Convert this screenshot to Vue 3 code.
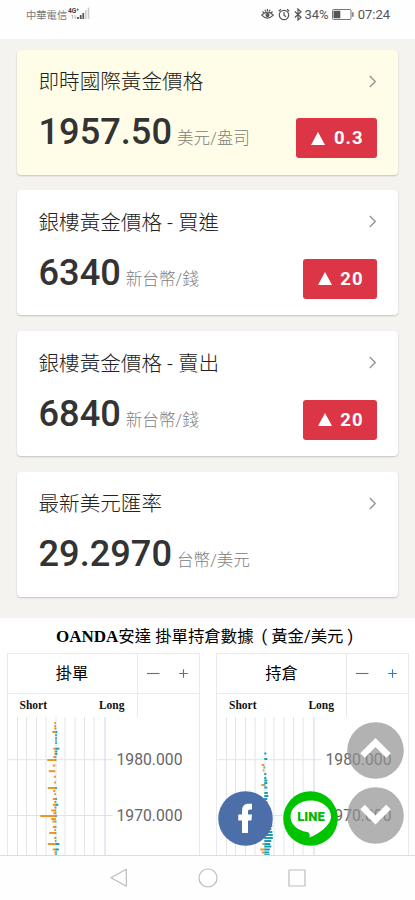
<script setup>
const cards = [
  { title: '即時國際黃金價格', value: '1957.50', unit: '美元/盎司', change: '0.3', highlight: true },
  { title: '銀樓黃金價格 - 買進', value: '6340', unit: '新台幣/錢', change: '20' },
  { title: '銀樓黃金價格 - 賣出', value: '6840', unit: '新台幣/錢', change: '20' },
  { title: '最新美元匯率', value: '29.2970', unit: '台幣/美元' },
]

const gridX = [9.5, 18.5, 28.5, 38, 48, 57, 67, 76.5, 86]

// Each row: [y, short length, long length], measured from the centre line
const panels = [
  {
    title: '掛單',
    center: 47.3,
    rows: [
      [5, 1, .6], [8, 1, .6], [10.5, 1, 1], [14, 3, 2], [17, 0, 1.5], [20, 0, 1.5], [22.5, 0, 1.5], [25, 0, 1.5],
      [30.7, 2, 4], [33.5, 1, 2], [36, 1, 2], [39, 2, 1], [42, 8, 1], [47.5, 2.5, 0], [53.2, 6.5, 0],
      [58.7, 1.5, .5], [64.5, 1, .6], [70, 7.5, 1.5], [73, 2, 0], [76, 1, .5], [81, 2.5, 1.5],
      [84, 1, 1], [86.8, 2.5, 3], [89.5, 1, 1], [92.5, 4, .8], [95.2, 2, 1], [98, 15, 1.5],
      [101, 4, .5], [103.5, 3, 1], [109, 2.5, 1], [112, 1, .5], [115, 6, 1], [120, 1, 1], [123, .5, 1],
      [126, 7.5, 4], [131.5, 2.5, 3.5], [134.5, 1, 1.5], [137, .5, 1.5],
    ],
  },
  {
    title: '持倉',
    center: 47.3,
    rows: [
      [35.5, 0, 2], [41, 0, 3], [47, 2.5, 0], [49.5, 1, .8], [52.5, 1.5, 0],
      [56, 0, 2], [60, 0, 2], [62.5, 0, 3], [65, 0, 3], [67, 3, 1],
      [69.5, 0, 3], [75, 0, 3.5], [78, 0, 4], [81, 0, 3], [84, 0, 3], [87, 0, 4], [90, 0, 4],
      [93, 0, 5], [96, 0, 6], [99, 0, 7], [102, 0, 7], [105, 0, 7], [108, 0, 8], [111, 0, 7],
      [114, 0, 8], [117, 0, 8.5], [120, 0, 8.5], [123, 0, 7], [126, 2, 6], [128.5, 0, 7],
      [131.5, 4, 5.5], [134.5, 2.5, 5], [137.2, 0, 5.5],
    ],
  },
]
</script>

<template>
  <div class="screen">
    <header class="status">
      <div class="carrier">
        <span>中華電信</span>
        <svg width="24" height="14" viewBox="0 0 24 14">
          <text x="0" y="5.5" class="net" textLength="11" lengthAdjust="spacingAndGlyphs">4G⁺</text>
          <path d="M4.5 8v3.5M3.3 9.2l1.2-1.4M7 8v3.5M8.2 10.4 7 11.6" stroke="#999" stroke-width=".7" fill="none" />
          <path d="M9 10h1.8v2H9zM11.8 8h1.8v4h-1.8zM14.4 6h1.7v6h-1.7z" fill="#555" />
          <path d="M17 3h1.6v9H17zM19.7 .5h1.6V12h-1.6z" fill="#ccc" />
        </svg>
      </div>
      <div class="indicators">
        <svg width="13" height="13" viewBox="0 0 13 13" fill="none" stroke="#555" stroke-width="1.2">
          <path d="M.7 7.2Q6.5 1.2 12.3 7.2Q6.5 13.2.7 7.2ZM1.5 3.5 2.8 4.8M4 1.7l.7 1.8M9 1.7l-.7 1.8M11.5 3.5l-1.3 1.3M6.5 1v2" />
          <circle cx="6.5" cy="7.1" r="1.5" fill="#555" />
        </svg>
        <svg class="alarm" width="12" height="13" viewBox="0 0 12 13" fill="none" stroke="#555" stroke-width="1.2">
          <circle cx="6" cy="7" r="4.7" /><path d="M6 4v3.2l2 1.5M.7 3.2 3 1.2M11.3 3.2 9 1.2" />
        </svg>
        <svg class="bluetooth" width="8" height="13" viewBox="0 0 8 13" fill="none" stroke="#555" stroke-width="1.2">
          <path d="M.8 3.5 7 9.2 4 12V1l3 2.8L.8 9.5" />
        </svg>
        <span>34%</span>
        <svg class="battery" width="22" height="11" viewBox="0 0 22 11">
          <rect x=".5" y=".5" width="18.5" height="10" rx="1" fill="none" stroke="#777" />
          <path d="M1.5 1.8h6.8v7.4H1.5zM20.3 3.3h1.2v4.5h-1.2z" fill="#555" />
        </svg>
        <span>07:24</span>
      </div>
    </header>

    <main class="prices">
      <article v-for="card in cards" :key="card.title" class="card" :class="{ highlight: card.highlight }">
        <div class="heading">
          <h2>{{ card.title }}</h2>
          <svg width="9" height="13" viewBox="0 0 9 13" fill="none" stroke="#999" stroke-width="1.5"><path d="m1.8 1 5.4 5.5-5.4 5.5" /></svg>
        </div>
        <div class="quote">
          <p><b>{{ card.value }}</b><span class="unit">{{ card.unit }}</span></p>
          <div v-if="card.change" class="change">
            <svg width="14" height="13" viewBox="0 0 14 13"><path d="M7 0 14 13H0z" fill="#fff" /></svg>
            <span>{{ card.change }}</span>
          </div>
        </div>
      </article>
    </main>

    <section class="oanda">
      <h3><span class="brand">OANDA</span>安達 掛單持倉數據<span class="paren open">(</span>黃金/美元<span class="paren close">)</span></h3>
      <div class="panels">
        <div v-for="panel in panels" :key="panel.title" class="panel">
          <div class="bar">
            <strong>{{ panel.title }}</strong>
            <div class="tools">
              <svg width="13" height="11" viewBox="0 0 13 11"><path d="M0 5.5h12.5" stroke="#3479b8" stroke-width="1.1" /></svg>
              <svg width="9" height="11" viewBox="0 0 9 11"><path d="M.3 5.5h8.4M4.5 1.2v8.6" stroke="#3479b8" stroke-width="1.1" /></svg>
            </div>
          </div>
          <div class="legend"><span>Short</span><span>Long</span></div>
          <svg class="chart" width="191" height="139" viewBox="0 0 191 139">
            <path v-for="x in gridX" :key="x" :d="`M${x} 0V139`" stroke="#e2e4e7" />
            <path d="M0 42.7H104.5M0 98.5H104.5" stroke="#e0e4e9" />
            <path d="M97 0V139" stroke="#ccd5e8" />
            <template v-for="row in panel.rows" :key="row[0]">
              <rect :x="panel.center - row[1]" :y="row[0]" :width="row[1]" height="2" fill="#f59322" />
              <rect :x="panel.center" :y="row[0]" :width="row[2]" height="2" fill="#159fb4" />
            </template>
            <text x="108.5" y="48.3" textLength="66">1980.000</text>
            <text x="108.5" y="104" textLength="66">1970.000</text>
          </svg>
        </div>
      </div>
    </section>

    <div class="floating facebook">
      <svg width="55" height="55" viewBox="0 0 55 55">
        <circle cx="27.5" cy="27.5" r="27.3" fill="#4c6fa9" />
        <path d="M24 42V29.5H20.3V23.5H24V20C24 15 26.5 12.8 30.5 12.8H34V18.5H32C30.5 18.5 30 19.3 30 20.5V23.5H34L33.4 29.5H30V42Z" fill="#fff" />
      </svg>
    </div>
    <div class="floating line">
      <svg width="55" height="55" viewBox="0 0 55 55">
        <circle cx="27.5" cy="27.5" r="27.3" fill="#00c300" />
        <path d="M28 9.5C16.5 9.5 7.5 16.5 7.5 25.5C7.5 33 14 39.5 24 41C26.5 41.5 27 42.5 26.5 46.5C34.5 43.5 48 35 48 25.5C48 16.5 39 9.5 28 9.5Z" fill="#fff" />
        <text x="28" y="30" text-anchor="middle" textLength="27.5" lengthAdjust="spacingAndGlyphs">LINE</text>
      </svg>
    </div>
    <div class="floating up">
      <svg width="57" height="57" viewBox="0 0 57 57"><circle cx="28.5" cy="28.5" r="28.3" /><path d="M15.5 33.5 28.5 20.5 41.5 33.5" /></svg>
    </div>
    <div class="floating down">
      <svg width="57" height="57" viewBox="0 0 57 57"><circle cx="28.5" cy="28.5" r="28.3" /><path d="M15.5 20 28.5 33 41.5 20" /></svg>
    </div>

    <nav class="navigation">
      <svg width="18" height="20" viewBox="0 0 18 20"><path d="M16.3 1.2v17L1 9.7z" /></svg>
      <svg width="20" height="20" viewBox="0 0 20 20"><circle cx="10" cy="10" r="9" /></svg>
      <svg width="18" height="18" viewBox="0 0 18 18"><rect x="1" y="1" width="16" height="16" /></svg>
    </nav>
  </div>
</template>

<style>
body { margin: 0; overflow: hidden; }
</style>

<style scoped>
* { box-sizing: border-box; }
h2, h3, p { margin: 0; }
svg { display: block; flex: none; }
.screen { position: relative; width: 415px; height: 900px; overflow: hidden; background: #fefefe; font-family: Roboto, "Noto Sans CJK TC", sans-serif; display: flex; flex-direction: column; }
.status { height: 39px; flex: none; padding: 3.5px 25px 0 26px; display: flex; justify-content: space-between; color: #555; }
.carrier { height: 21px; display: flex; align-items: center; gap: 1px; font-size: 10.3px; font-weight: 400; color: #777; }
.net { font: bold 7px "Roboto", sans-serif; fill: #444; }
.indicators { height: 22px; display: flex; align-items: center; font-size: 13px; }
.alarm { margin-left: 4px; }
.bluetooth { margin-left: 4px; margin-right: 2px; }
.battery { margin: 0 3.5px; }
.prices { height: 579px; flex: none; background: #f4f3ef; padding: 10.5px 17px 0; display: flex; flex-direction: column; gap: 15.8px; }
.card { height: 125px; flex: none; border-radius: 4px; background: #fff; box-shadow: 0 1px 2px rgba(0, 0, 0, .2); padding: 14.5px 21px 0 21.5px; }
.card.highlight { background: #fffde7; }
.heading { height: 34px; display: flex; align-items: center; justify-content: space-between; }
h2 { font-size: 20.6px; font-weight: 300; color: #222; line-height: 34px; padding-top: 2px; white-space: nowrap; }
.quote { display: flex; justify-content: space-between; height: 62px; padding-top: 11px; }
.quote p { height: 46px; line-height: 46px; white-space: nowrap; }
.quote b { font-size: 36.2px; font-weight: 500; color: #333; }
.unit { margin-left: 5px; font-size: 16.6px; font-weight: 300; color: #808080; }
.change { margin-top: 9px; height: 40px; padding: 0 13.5px 0 15px; background: #dc3545; border-radius: 3px; display: flex; align-items: center; gap: 8.5px; color: #fff; font-size: 18.5px; font-weight: 700; letter-spacing: 1px; }
.oanda { height: 237px; flex: none; overflow: hidden; background: #fff; }
h3 { height: 35px; line-height: 38px; padding-left: 56px; font-size: 16.4px; font-weight: 400; color: #000; white-space: nowrap; }
.brand { font: 700 17px "Liberation Serif", serif; }
.open { margin-left: 8px; margin-right: 4px; }
.close { margin-left: 4px; }
.panels { display: flex; gap: 16.5px; padding-left: 6.5px; }
.panel { width: 193px; height: 220px; flex: none; border: 1px solid #e8ebee; }
.bar { display: flex; height: 40px; border-bottom: 1px solid #e8ebee; }
.bar strong { width: 130px; border-right: 1px solid #e8ebee; text-align: center; line-height: 39px; font-size: 16.2px; font-weight: 400; color: #000; }
.tools { flex: 1; display: flex; align-items: center; justify-content: space-between; padding: 0 11px 0 9px; }
.legend { width: 130px; height: 23px; padding: 0 12px; border-right: 1px solid #e8ebee; display: flex; justify-content: space-between; font: 700 11.5px/22px "Liberation Serif", serif; color: #111; }
.chart text { font: 400 15.7px Roboto, sans-serif; fill: #666; }
.floating { position: absolute; }
.facebook { left: 218px; top: 790.5px; }
.line { left: 282.5px; top: 790.5px; }
.line text { font: 900 13.5px Roboto, sans-serif; fill: #00b900; }
.up { left: 347px; top: 722px; }
.down { left: 347px; top: 787px; }
.up circle, .down circle { fill: rgba(145, 145, 145, .7); }
.up path, .down path { fill: none; stroke: #fff; stroke-width: 6.5; }
.navigation { height: 45px; flex: none; border-top: 1px solid #ddd; background: #fefefe; display: flex; align-items: center; gap: 70px; padding-left: 109.5px; }
.navigation svg { fill: none; stroke: #bcbcbc; stroke-width: 1.2; stroke-linejoin: round; }
</style>
